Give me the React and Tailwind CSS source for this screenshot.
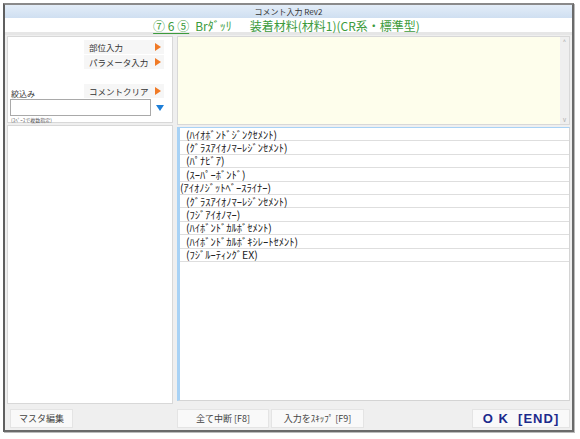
const jp = { fontFamily: '"Noto Sans CJK JP", "Noto Sans", sans-serif' };

const items = [
  { text: "(ﾊｲｵﾎﾞﾝﾄﾞｼﾞﾝｸｾﾒﾝﾄ)", indent: true },
  { text: "(ｸﾞﾗｽｱｲｵﾉﾏｰﾚｼﾞﾝｾﾒﾝﾄ)", indent: true },
  { text: "(ﾊﾟﾅﾋﾞｱ)", indent: true },
  { text: "(ｽｰﾊﾟｰﾎﾞﾝﾄﾞ)", indent: true },
  { text: "(ｱｲｵﾉｼﾞｯﾄﾍﾞｰｽﾗｲﾅｰ)", indent: false },
  { text: "(ｸﾞﾗｽｱｲｵﾉﾏｰﾚｼﾞﾝｾﾒﾝﾄ)", indent: true },
  { text: "(ﾌｼﾞｱｲｵﾉﾏｰ)", indent: true },
  { text: "(ﾊｲﾎﾞﾝﾄﾞｶﾙﾎﾞｾﾒﾝﾄ)", indent: true },
  { text: "(ﾊｲﾎﾞﾝﾄﾞｶﾙﾎﾞｷｼﾚｰﾄｾﾒﾝﾄ)", indent: true },
  { text: "(ﾌｼﾞﾙｰﾃｨﾝｸﾞEX)", indent: true },
];

function SideButton({ label }) {
  return (
    <div className="flex h-[14px] w-[80px] items-center justify-between bg-[#f6f6f6] pl-[5px] pr-[3px]">
      <span className="text-[8.5px] leading-[10px] text-[#333]">{label}</span>
      <span className="h-0 w-0 border-y-[4px] border-l-[6px] border-y-transparent border-l-[#f07a26]" />
    </div>
  );
}

function FootButton({ children, className }) {
  return (
    <div
      className={
        "flex h-[19px] items-center justify-center border border-[#e4e4e4] bg-[#f9f9f9] text-[9px] leading-[11px] text-[#444] " +
        className
      }
    >
      {children}
    </div>
  );
}

export default function App() {
  return (
    <div className="h-[439px] w-[580px] bg-white pl-[3px] pt-[3px]" style={jp}>
      <div className="flex h-[429px] w-[571px] flex-col border-2 border-l-[#5f5f5f] border-t-[#8a8a8a] border-r-[#6a6a6a] border-b-[#6a6a6a] bg-[#efefef] shadow-[1px_1px_0_#bbb]">
        {/* title bar */}
        <div className="flex h-[13px] items-center justify-center bg-gradient-to-b from-[#e3edf8] to-[#cfdff1] text-[8px] leading-[9px] text-[#333]">
          コメント入力 Rev2
        </div>

        {/* header */}
        <div className="flex h-[17px] items-center justify-center border-b-[3px] border-[#e6e6e6] bg-white pr-[4px] text-[12px] leading-[13px] text-[#3c9b3c]">
          <span className="underline underline-offset-2">⑦&nbsp;6&nbsp;⑤</span>
          <span className="ml-[6px]">Brﾀﾞｯﾘ</span>
          <span className="ml-[18px]">装着材料(材料1)(CR系・標準型)</span>
        </div>

        {/* body */}
        <div className="flex flex-1 gap-[4px] pl-[2px] pr-[2px] pt-[1px]">
          {/* left column */}
          <div className="flex w-[166px] flex-col gap-[2px]">
            <div className="relative h-[87px] border border-[#d8d8d8] bg-white">
              <div className="absolute left-[76px] top-[3px] flex flex-col gap-[1px]">
                <SideButton label="部位入力" />
                <SideButton label="パラメータ入力" />
              </div>
              <div className="absolute left-[3px] top-[52px] text-[8px] leading-[9px] text-[#333]">絞込み</div>
              <div className="absolute left-[76px] top-[47px]">
                <SideButton label="コメントクリア" />
              </div>
              <div className="absolute left-[2px] top-[62px] h-[17px] w-[141px] border border-[#a9a9a9] bg-white" />
              <span className="absolute left-[148px] top-[68px] h-0 w-0 border-x-[4px] border-t-[6px] border-x-transparent border-t-[#1e7fd8]" />
              <div className="absolute left-[3px] top-[80px] text-[5px] leading-[6px] text-[#555]">(ｽﾍﾟｰｽで複数指定)</div>
            </div>
            <div className="h-[279px] border border-[#d8d8d8] bg-white" />
          </div>

          {/* right column */}
          <div className="flex flex-1 flex-col gap-[2px]">
            <div className="flex h-[89px] border border-[#d8d8d8] bg-[#fefeec]">
              <div className="flex-1" />
              <div className="flex w-[9px] flex-col items-center justify-between bg-[#efefef] py-[1px] text-[6px] leading-[7px] text-[#aaa]">
                <span>^</span>
                <span>v</span>
              </div>
            </div>
            <div className="h-[274px] border border-l-[3px] border-[#d4d4d4] border-l-[#a8d2f5] border-t-[#a8d2f5] bg-white">
              {items.map((it, i) => (
                <div
                  key={i}
                  className={
                    "flex h-[13.4px] items-center border-b border-[#dedede] text-[10.5px] leading-[11px] text-[#222] " +
                    (it.indent ? "pl-[6px]" : "pl-0")
                  }
                >
                  {it.text}
                </div>
              ))}
            </div>
          </div>
        </div>

        {/* footer */}
        <div className="flex h-[24px] items-center pl-[5px] pr-[2px]">
          <FootButton className="w-[63px]">マスタ編集</FootButton>
          <FootButton className="ml-[104px] w-[92px]">全て中断 [F8]</FootButton>
          <FootButton className="ml-[2px] w-[93px]">入力をｽｷｯﾌﾟ [F9]</FootButton>
          <div
            className="ml-auto flex h-[19px] w-[98px] items-center justify-center border border-[#e4e4e4] bg-[#f9f9f9] text-[13px] font-bold leading-[15px] tracking-[1px] text-[#1c2a8c]"
            style={{ fontFamily: '"Liberation Sans", "Noto Sans CJK JP", sans-serif' }}
          >
            O K&nbsp;&nbsp;[END]
          </div>
        </div>
      </div>
    </div>
  );
}
